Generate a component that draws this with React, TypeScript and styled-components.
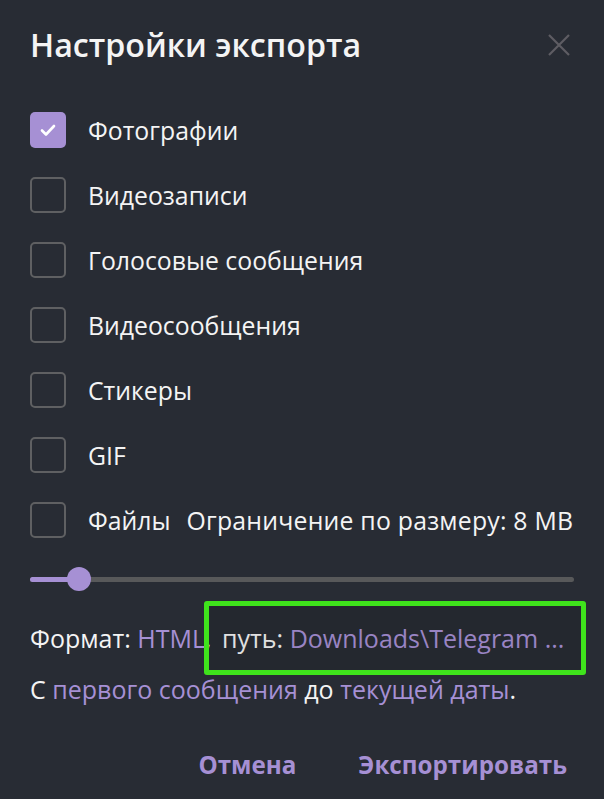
import styled, { createGlobalStyle } from 'styled-components';

const accent = '#a690d4';

const GlobalStyle = createGlobalStyle`
  html, body {
    margin: 0;
    padding: 0;
    background: #282c34;
  }
  body {
    font-family: 'Open Sans', 'Noto Sans', sans-serif;
    color: #f4f4f4;
  }
`;

const Dialog = styled.div`
  width: 604px;
  height: 799px;
  box-sizing: border-box;
  padding: 0 30px;
  display: flex;
  flex-direction: column;
  background: #282c34;
  overflow: hidden;
`;

const Header = styled.div`
  display: flex;
  align-items: center;
  justify-content: space-between;
  height: 97px;
  padding-bottom: 8px;
  box-sizing: border-box;
`;

const Title = styled.h1`
  margin: 0;
  font-size: 32.2px;
  font-weight: 600;
`;

const CloseButton = styled.button`
  border: 0;
  background: none;
  padding: 0;
  margin-right: 3px;
  width: 24px;
  height: 24px;
  display: flex;
  align-items: center;
  justify-content: center;
  cursor: pointer;
`;

const OptionList = styled.div`
  display: flex;
  flex-direction: column;
`;

const OptionRow = styled.label`
  display: flex;
  align-items: center;
  height: 65px;
  font-size: 24.8px;
  white-space: nowrap;
`;

const Box = styled.span<{ $checked: boolean }>`
  width: 36px;
  height: 36px;
  box-sizing: border-box;
  border-radius: 5px;
  margin-right: 22px;
  flex-shrink: 0;
  display: flex;
  align-items: center;
  justify-content: center;
  border: ${(p) => (p.$checked ? 'none' : '2.5px solid #5f6062')};
  background: ${(p) => (p.$checked ? accent : 'transparent')};
`;

const SizeNote = styled.span`
  margin-left: 16px;
  letter-spacing: 0.22px;
`;

const Slider = styled.div`
  position: relative;
  height: 24px;
  margin-top: 15px;
  display: flex;
  align-items: center;
`;

const Track = styled.div`
  flex: 1;
  height: 5px;
  border-radius: 3px;
  background: #58595a;
  display: flex;
`;

const Fill = styled.div`
  height: 100%;
  border-radius: 3px 0 0 3px;
  background: ${accent};
`;

const Thumb = styled.div`
  position: absolute;
  top: 0;
  width: 24px;
  height: 24px;
  margin-left: -12px;
  border-radius: 50%;
  background: ${accent};
`;

const InfoLine = styled.div<{ $gap: number }>`
  margin-top: ${(p) => p.$gap}px;
  font-size: 25px;
  line-height: 30px;
  white-space: nowrap;
`;

const Link = styled.span`
  color: ${accent};
`;

const Highlight = styled.span`
  position: relative;
  margin-left: 4px;
  &::after {
    content: '';
    position: absolute;
    left: -18px;
    right: -22px;
    top: -20px;
    bottom: -20px;
    border: 5px solid #3fe31c;
    border-radius: 3px;
    background: rgba(0, 0, 0, 0.08);
    pointer-events: none;
  }
`;

const Buttons = styled.div`
  margin-top: 40px;
  display: flex;
  justify-content: flex-end;
  gap: 62px;
  padding-right: 7px;
`;

const TextButton = styled.button`
  border: 0;
  background: none;
  padding: 0;
  height: 40px;
  font-family: 'Open Sans', 'Noto Sans', sans-serif;
  font-size: 24.2px;
  font-weight: 700;
  color: ${accent};
  cursor: pointer;
`;

const options = [
  { label: 'Фотографии', checked: true },
  { label: 'Видеозаписи', checked: false },
  { label: 'Голосовые сообщения', checked: false },
  { label: 'Видеосообщения', checked: false },
  { label: 'Стикеры', checked: false },
  { label: 'GIF', checked: false },
  { label: 'Файлы', checked: false },
];

const sliderValue = 0.09;

export default function App() {
  return (
    <>
      <GlobalStyle />
      <Dialog>
        <Header>
          <Title>Настройки экспорта</Title>
          <CloseButton aria-label="Закрыть">
            <svg width="22" height="22" viewBox="0 0 22 22">
              <path d="M1 1 L21 21 M21 1 L1 21" stroke="#5e5d63" strokeWidth="2.2" />
            </svg>
          </CloseButton>
        </Header>
        <OptionList>
          {options.map((o) => (
            <OptionRow key={o.label}>
              <Box $checked={o.checked}>
                {o.checked && (
                  <svg width="20" height="20" viewBox="0 0 20 20">
                    <path
                      d="M4 10.5 L8 14.5 L16 6"
                      fill="none"
                      stroke="#fff"
                      strokeWidth="2.6"
                      strokeLinecap="round"
                      strokeLinejoin="round"
                    />
                  </svg>
                )}
              </Box>
              {o.label}
              {o.label === 'Файлы' && <SizeNote>Ограничение по размеру: 8 MB</SizeNote>}
            </OptionRow>
          ))}
        </OptionList>
        <Slider>
          <Track>
            <Fill style={{ width: `${sliderValue * 100}%` }} />
          </Track>
          <Thumb style={{ left: `${sliderValue * 100}%` }} />
        </Slider>
        <InfoLine $gap={32}>
          Формат: <Link>HTML</Link>,{' '}
          <Highlight>
            путь: <Link>Downloads\Telegram ...</Link>
          </Highlight>
        </InfoLine>
        <InfoLine $gap={21}>
          С <Link>первого сообщения</Link> до <Link>текущей даты</Link>.
        </InfoLine>
        <Buttons>
          <TextButton>Отмена</TextButton>
          <TextButton>Экспортировать</TextButton>
        </Buttons>
      </Dialog>
    </>
  );
}
